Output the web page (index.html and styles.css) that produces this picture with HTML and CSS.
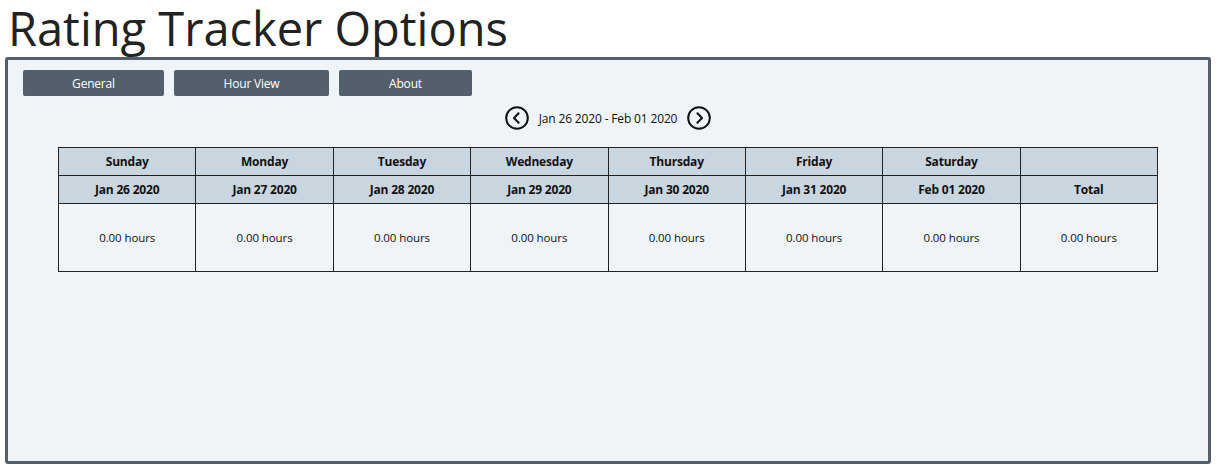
FILE: index.html
```html
<!DOCTYPE html>
<html>
<head>
<meta charset="utf-8">
<link rel="stylesheet" href="styles.css">
</head>
<body>
<h1 class="title">Rating Tracker Options</h1>
<div class="panel">
  <div class="tabs">
    <button class="tab tab-general">General</button>
    <button class="tab tab-hours">Hour View</button>
    <button class="tab tab-about">About</button>
  </div>
  <div class="week-nav">
    <span class="nav-btn">
      <svg width="24" height="24" viewBox="0 0 24 24"><circle cx="12" cy="12" r="10.8" fill="none" stroke="#111" stroke-width="2"/><path d="M13.6 7.2 L9 12 L13.6 16.8" fill="none" stroke="#111" stroke-width="2" stroke-linecap="round" stroke-linejoin="round"/></svg>
    </span>
    <span class="week-label">Jan 26 2020 - Feb 01 2020</span>
    <span class="nav-btn">
      <svg width="24" height="24" viewBox="0 0 24 24"><circle cx="12" cy="12" r="10.8" fill="none" stroke="#111" stroke-width="2"/><path d="M10.4 7.2 L15 12 L10.4 16.8" fill="none" stroke="#111" stroke-width="2" stroke-linecap="round" stroke-linejoin="round"/></svg>
    </span>
  </div>
  <table class="week-table">
    <thead>
      <tr>
        <th>Sunday</th><th>Monday</th><th>Tuesday</th><th>Wednesday</th><th>Thursday</th><th>Friday</th><th>Saturday</th><th></th>
      </tr>
      <tr>
        <th>Jan 26 2020</th><th>Jan 27 2020</th><th>Jan 28 2020</th><th>Jan 29 2020</th><th>Jan 30 2020</th><th>Jan 31 2020</th><th>Feb 01 2020</th><th>Total</th>
      </tr>
    </thead>
    <tbody>
      <tr>
        <td>0.00 hours</td><td>0.00 hours</td><td>0.00 hours</td><td>0.00 hours</td><td>0.00 hours</td><td>0.00 hours</td><td>0.00 hours</td><td>0.00 hours</td>
      </tr>
    </tbody>
  </table>
</div>
</body>
</html>
```
FILE: styles.css
```css
html, body {
  margin: 0;
  padding: 0;
  background: #ffffff;
}
body {
  font-family: "Open Sans", "Noto Sans", sans-serif;
  color: #111;
  padding: 0 9px 0 5px;
}
.title {
  margin: 0;
  padding-left: 3px;
  font-weight: 400;
  font-size: 47px;
  line-height: 57px;
  color: #222;
  white-space: nowrap;
}
.panel {
  box-sizing: border-box;
  height: 407px;
  border: 3px solid #525f6a;
  border-radius: 3px;
  background: #eff4f8;
  padding: 10px 15px 0 15px;
}
.tabs {
  display: flex;
  gap: 10px;
}
.tab {
  height: 26px;
  border: none;
  border-radius: 2px;
  background: #535f6b;
  color: #fff;
  font-family: inherit;
  font-size: 12px;
  padding: 0;
  letter-spacing: -0.2px;
}
.tab-general { width: 141px; }
.tab-hours { width: 155px; }
.tab-about { width: 133px; }
.week-nav {
  display: flex;
  justify-content: center;
  align-items: center;
  gap: 10px;
  margin-top: 10px;
  height: 24px;
}
.nav-btn {
  display: flex;
  width: 24px;
  height: 24px;
}
.week-label {
  font-size: 12px;
  letter-spacing: -0.15px;
}
.week-table {
  width: 1100px;
  margin: 17px auto 0;
  border-collapse: collapse;
  table-layout: fixed;
  font-size: 12px;
}
.week-table th,
.week-table td {
  border: 1px solid #222;
  text-align: center;
  padding: 0;
}
.week-table th {
  background: #c9d5df;
  height: 27px;
  font-weight: 700;
  letter-spacing: -0.2px;
}
.week-table td {
  height: 67px;
  font-size: 11.5px;
  letter-spacing: -0.1px;
}
```
